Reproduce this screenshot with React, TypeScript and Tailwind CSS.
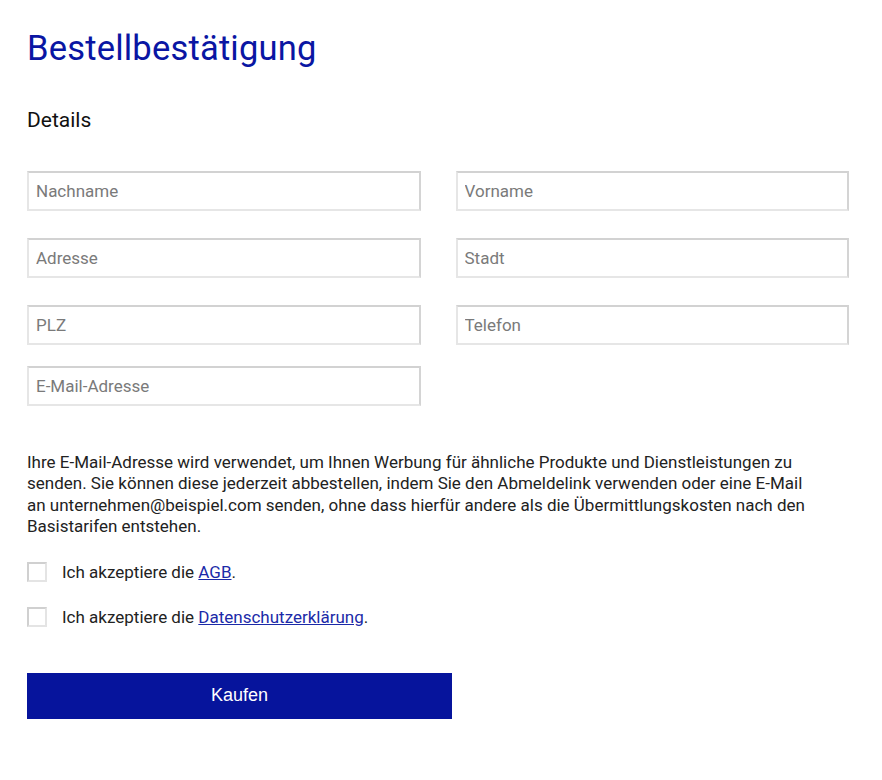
import React from "react";

function Field({ placeholder }: { placeholder: string }) {
  return (
    <input
      type="text"
      placeholder={placeholder}
      className="h-[40px] w-full border-2 border-[#e6e6e6] border-t-[#d2d2d2] border-r-[#d4d4d4] bg-white px-[7px] text-[17px] text-[#333] placeholder:text-[#7a7a7a] outline-none"
    />
  );
}

function Check({ children }: { children: React.ReactNode }) {
  return (
    <label className="flex h-[20px] items-center gap-[15px] text-[17px] leading-[20px] text-[#222]">
      <span className="block h-[20px] w-[20px] shrink-0 border-2 border-[#e4e4e4] border-t-[#d0d0d0] border-l-[#d0d0d0] bg-white" />
      <span>{children}</span>
    </label>
  );
}

export default function App() {
  return (
    <div className="min-h-[780px] bg-white px-[27px] pt-[26px] font-['Roboto','Liberation_Sans',sans-serif]">
      <h1 className="text-[34.5px] leading-[44px] tracking-[0.2px] text-[#0a16a3]">Bestellbestätigung</h1>
      <h2 className="mt-[35px] text-[21px] leading-[30px] text-[#111]">Details</h2>
      <div className="mt-[36px] grid w-[822px] grid-cols-2 gap-x-[35px] gap-y-[27px]">
        <Field placeholder="Nachname" />
        <Field placeholder="Vorname" />
        <Field placeholder="Adresse" />
        <Field placeholder="Stadt" />
        <Field placeholder="PLZ" />
        <Field placeholder="Telefon" />
      </div>
      <div className="mt-[21px] grid w-[822px] grid-cols-2 gap-x-[35px]">
        <Field placeholder="E-Mail-Adresse" />
      </div>
      <p className="mt-[46px] w-[820px] text-[17px] leading-[21.4px] text-[#222]">
        Ihre E-Mail-Adresse wird verwendet, um Ihnen Werbung für ähnliche Produkte und Dienstleistungen zu
        <br />
        senden. Sie können diese jederzeit abbestellen, indem Sie den Abmeldelink verwenden oder eine E-Mail
        <br />
        an unternehmen@beispiel.com senden, ohne dass hierfür andere als die Übermittlungskosten nach den
        <br />
        Basistarifen entstehen.
      </p>
      <div className="mt-[24px] flex flex-col gap-[25px]">
        <Check>
          Ich akzeptiere die <a href="#" className="text-[#1b2aa8] underline">AGB</a>.
        </Check>
        <Check>
          Ich akzeptiere die <a href="#" className="text-[#1b2aa8] underline">Datenschutzerklärung</a>.
        </Check>
      </div>
      <button className="mt-[46px] block h-[46px] w-[425px] bg-[#06149c] font-['Liberation_Sans',Arial,sans-serif] text-[18px] text-white">
        Kaufen
      </button>
    </div>
  );
}
